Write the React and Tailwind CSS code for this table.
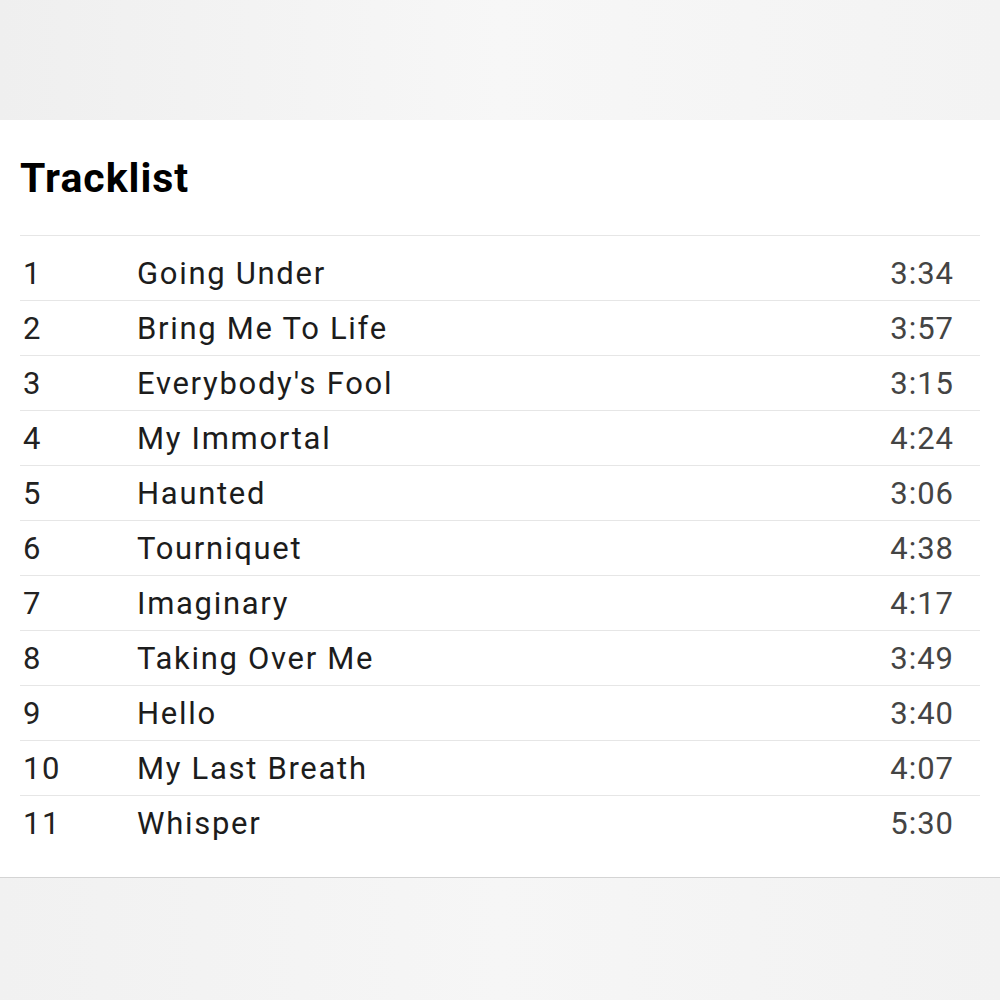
const tracks = [
  { n: 1, title: "Going Under", time: "3:34" },
  { n: 2, title: "Bring Me To Life", time: "3:57" },
  { n: 3, title: "Everybody's Fool", time: "3:15" },
  { n: 4, title: "My Immortal", time: "4:24" },
  { n: 5, title: "Haunted", time: "3:06" },
  { n: 6, title: "Tourniquet", time: "4:38" },
  { n: 7, title: "Imaginary", time: "4:17" },
  { n: 8, title: "Taking Over Me", time: "3:49" },
  { n: 9, title: "Hello", time: "3:40" },
  { n: 10, title: "My Last Breath", time: "4:07" },
  { n: 11, title: "Whisper", time: "5:30" }
];

export default function App() {
  return (
    <div className="flex min-h-[1000px] w-[1000px] flex-col bg-[#f3f3f3] font-['Roboto',sans-serif]">
      <div className="h-[120px] bg-gradient-to-r from-[#efefef] via-[#f7f7f7] to-[#f3f3f3]" />
      <section className="border-b border-[#d4d4d4] bg-white px-5 pb-[26px] pt-[36px]">
        <h2 className="text-[41px] font-bold leading-[44px] tracking-[1px] text-black">Tracklist</h2>
        <div className="mt-[35px] border-t border-[#e6e6e6] pt-[10px]">
          {tracks.map((t, i) => (
            <div
              key={t.n}
              className={
                i < tracks.length - 1
                  ? "flex h-[55px] items-center border-b border-[#e6e6e6] text-[31px] leading-[55px] tracking-[1.7px]"
                  : "flex h-[55px] items-center text-[31px] leading-[55px] tracking-[1.7px]"
              }
            >
              <span className="w-[117px] shrink-0 pl-[3px] text-[#222]">{t.n}</span>
              <span className="flex-1 text-[#1c1c1c]">{t.title}</span>
              <span className="pr-[26px] tracking-[1px] text-[#444]">{t.time}</span>
            </div>
          ))}
        </div>
      </section>
      <div className="flex-1 bg-gradient-to-r from-[#f1f1f1] via-[#f6f6f6] to-[#f2f2f2]" />
    </div>
  );
}
